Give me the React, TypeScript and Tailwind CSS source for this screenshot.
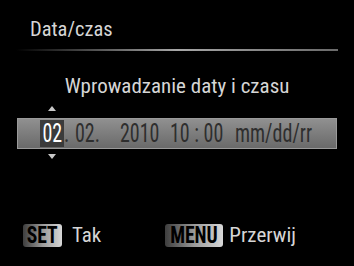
const font = { fontFamily: '"Roboto Condensed", "DejaVu Sans Condensed", sans-serif' };

function KeyLabel({ label, width }: { label: string; width: string }) {
  return (
    <span
      className={`flex h-[23px] ${width} items-center justify-center rounded-[3px] bg-gradient-to-r from-[#3e3e3e] via-[#9a9a9a] to-[#d8d8d8] text-black`}
    >
      <span className="inline-block scale-x-[0.85] text-[23px] font-bold leading-none">{label}</span>
    </span>
  );
}

// one piece of the date line, laid out in a fixed-width slot
function Seg({ w, children }: { w: string; children: string }) {
  return (
    <span className={`${w} shrink-0`}>
      <span className="inline-block origin-left scale-x-[0.8]">{children}</span>
    </span>
  );
}

export default function App() {
  return (
    <div className="h-[266px] w-[354px] overflow-hidden whitespace-nowrap bg-black text-[#d6d6d6]" style={font}>
      <div className="px-[30px] pt-[17px] text-[20.5px] leading-[24px]">Data/czas</div>
      <div className="mx-[16px] mt-[8px] h-[2px] bg-gradient-to-r from-transparent via-[#a8a8a8] to-[#6a6a6a]" />

      <div className="mt-[24px] text-center text-[21px] leading-[22px]">Wprowadzanie daty i czasu</div>

      <div className="ml-[48px] mt-[9px] h-0 w-0 border-x-[4.5px] border-b-[5px] border-x-transparent border-b-[#c8c8c8]" />

      <div className="mx-[17px] mt-[7px] flex h-[31px] items-center border border-[#9a9a9a] bg-gradient-to-b from-[#909090] to-[#6a6a6a] text-[25px] leading-none text-[#2e2e2e]">
        <span className="ml-[22px] flex h-[27px] w-[24px] shrink-0 items-center justify-center bg-[#3b3b3b] text-white">
          <span className="inline-block scale-x-[0.8]">02</span>
        </span>
        <Seg w="w-[11px]">.</Seg>
        <Seg w="w-[45px]">02.</Seg>
        <Seg w="w-[50px]">2010</Seg>
        <Seg w="w-[65px]">10 : 00</Seg>
        <Seg w="w-[80px]">mm/dd/rr</Seg>
      </div>

      <div className="ml-[48px] mt-[5px] h-0 w-0 border-x-[4.5px] border-t-[5px] border-x-transparent border-t-[#c8c8c8]" />

      <div className="mt-[61px] flex items-center text-[21px]">
        <div className="ml-[23px] flex items-center gap-[10px]">
          <KeyLabel label="SET" width="w-[39px]" />
          <span>Tak</span>
        </div>
        <div className="ml-[64px] flex items-center gap-[6px]">
          <KeyLabel label="MENU" width="w-[58px]" />
          <span>Przerwij</span>
        </div>
      </div>
    </div>
  );
}
